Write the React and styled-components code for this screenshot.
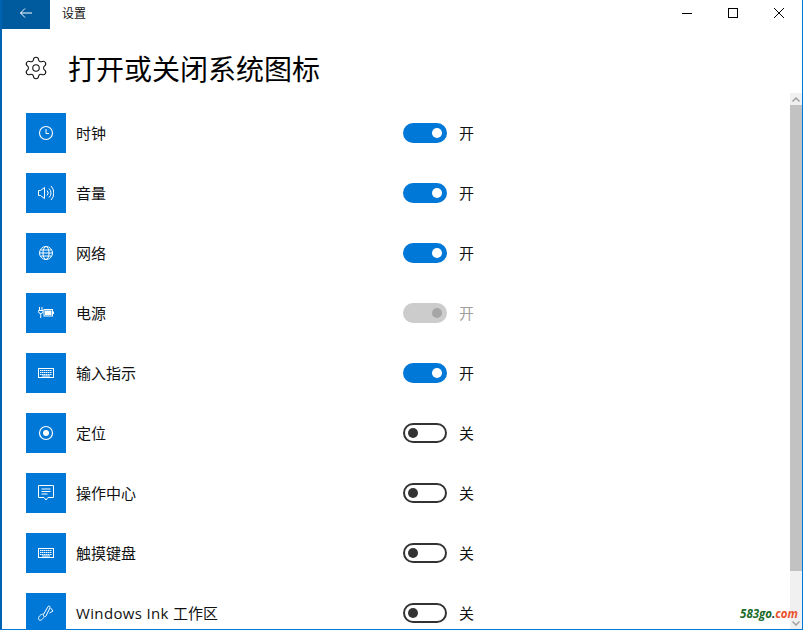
import React from 'react';
import styled, { createGlobalStyle } from 'styled-components';
import { Settings } from 'lucide-react';

const GlobalStyle = createGlobalStyle`
  html, body { margin: 0; padding: 0; background: #fff; }
  body { font-family: "Noto Sans CJK SC", "Open Sans", sans-serif; }
`;

const Win = styled.div`
  position: relative;
  box-sizing: border-box;
  width: 803px;
  height: 630px;
  overflow: hidden;
  display: flex;
  flex-direction: column;
  background: #fff;
  border-left: 2px solid #0063b1;
  border-right: 1px solid #0078d7;
  border-bottom: 1px solid #0078d7;
`;

const TitleBar = styled.div`
  height: 29px;
  flex: none;
  display: flex;
  align-items: flex-start;
`;

const BackBtn = styled.div`
  box-sizing: border-box;
  width: 48px;
  height: 29px;
  padding-bottom: 4px;
  background: #005a9e;
  color: #fff;
  display: flex;
  align-items: center;
  justify-content: center;
`;

const TitleText = styled.div`
  margin-left: 12px;
  font-size: 12px;
  line-height: 26px;
  color: #111;
  flex: 1;
`;

const WinBtn = styled.div`
  width: 46px;
  height: 26px;
  display: flex;
  align-items: center;
  justify-content: center;
`;

const Header = styled.div`
  box-sizing: border-box;
  height: 64px;
  flex: none;
  display: flex;
  align-items: center;
  padding: 13px 0 0 21px;
  gap: 19px;
  color: #111;
`;

const PageTitle = styled.h1`
  margin: 0;
  font-size: 28px;
  font-weight: 400;
  color: #000;
`;

const Body = styled.div`
  flex: 1;
  min-height: 0;
  display: flex;
`;

const List = styled.div`
  flex: 1;
  overflow: hidden;
  padding: 20px 0 0 24px;
  display: flex;
  flex-direction: column;
  gap: 20px;
`;

const Row = styled.div`
  flex: none;
  height: 40px;
  display: flex;
  align-items: center;
`;

const IconBox = styled.div`
  width: 40px;
  height: 40px;
  flex: none;
  background: #0078d7;
  color: #fff;
  display: flex;
  align-items: center;
  justify-content: center;
`;

const Label = styled.div`
  width: 327px;
  margin-left: 10px;
  padding-bottom: 2px;
  font-size: 15px;
  color: #111;
  font-family: "Open Sans", "Noto Sans CJK SC", sans-serif;
`;

const Latin = styled.span`
  letter-spacing: 0.35px;
`;

const Toggle = styled.div`
  box-sizing: border-box;
  width: 44px;
  height: 20px;
  border-radius: 10px;
  display: flex;
  align-items: center;
  padding: 0 ${p => (p.$on ? '5px' : '3px')};
  justify-content: ${p => (p.$on ? 'flex-end' : 'flex-start')};
  background: ${p => (p.$disabled ? '#cccccc' : p.$on ? '#0078d7' : 'transparent')};
  border: ${p => (p.$on ? 'none' : '2px solid #333')};
`;

const Knob = styled.div`
  width: 10px;
  height: 10px;
  border-radius: 50%;
  background: ${p => (p.$disabled ? '#a6a6a6' : p.$on ? '#fff' : '#333')};
`;

const State = styled.div`
  margin-left: 12px;
  padding-bottom: 2px;
  font-size: 15px;
  color: ${p => (p.$disabled ? '#a0a0a0' : '#111')};
`;

const ScrollBar = styled.div`
  width: 12px;
  flex: none;
  background: #f0f0f0;
  display: flex;
  flex-direction: column;
`;

const ScrollArrow = styled.div`
  height: 12px;
  flex: none;
  display: flex;
  align-items: center;
  justify-content: center;
`;

const ScrollThumb = styled.div`
  height: 466px;
  flex: none;
  background: #c2c2c2;
`;

const ScrollRest = styled.div`
  flex: 1;
`;

const Watermark = styled.div`
  position: absolute;
  right: 4px;
  bottom: 7px;
  font-family: "Open Sans", sans-serif;
  font-size: 11.5px;
  line-height: 16px;
  font-style: italic;
  font-weight: 700;
  color: #1a6b2a;
`;

const Dot = styled.span`
  color: #333;
`;

const Com = styled.span`
  color: #e8502a;
`;

const Glyph = ({ children }) => (
  <svg width="16" height="16" viewBox="0 0 16 16" fill="none" stroke="currentColor" strokeWidth="1">
    {children}
  </svg>
);

const keyboard = (
  <Glyph>
    <rect x="0.5" y="3.5" width="15" height="9" />
    <path d="M2 5.5h12M2 7.5h12" strokeDasharray="1.5 .5" />
    <path d="M2 9.500h12" strokeDasharray="1.5 .5" />
    <path d="M4 11h8" />
  </Glyph>
);

const icons = {
  clock: (
    <Glyph>
      <circle cx="8" cy="8" r="6.5" strokeWidth="1.1" />
      <path d="M8 4v4.5h3" />
    </Glyph>
  ),
  sound: (
    <Glyph>
      <path d="M.5 5.5h2l4-3v11l-4-3h-2z" />
      <path d="M9 5.5a3.5 3.500 0 0 1 0 5M11 3.500a6 6 0 0 1 0 9M13 1a10 10 0 0 1 0 14" />
    </Glyph>
  ),
  globe: (
    <Glyph>
      <circle cx="8" cy="8" r="6.5" />
      <ellipse cx="8" cy="8" rx="3" ry="6.5" />
      <path d="M1.5 8h13M2.5 5h11M2.5 11h11" />
    </Glyph>
  ),
  power: (
    <Glyph>
      <path d="M1.500 2v3M4 2v3M.5 5.500h4.500v1a2 2 0 0 1-2 2h-.5a2 2 0 0 1-2-2zM2.750 8.500v4.500" />
      <rect x="6" y="4.500" width="8.500" height="6.500" />
      <rect x="7" y="5.500" width="6.500" height="4.500" fill="currentColor" stroke="none" />
      <path d="M15.500 6.500v2.500" />
    </Glyph>
  ),
  keyboard,
  location: (
    <Glyph>
      <circle cx="8" cy="8" r="6.5" strokeWidth="1.2" />
      <circle cx="8" cy="8" r="3" fill="currentColor" stroke="none" />
    </Glyph>
  ),
  action: (
    <Glyph>
      <path d="M.5 .5h15v12H10l-2 2.500-2-2.500H.5z" />
      <path d="M3.500 4h9M3.500 6.500h9M3.500 9h6" />
    </Glyph>
  ),
  ink: (
    <Glyph>
      <path d="M5.500 9.500L10 1.500c1-1 2.500-.3 2 1.200L8 11c-.8 1.300-2.200 1-2.500-.2z" />
      <path d="M5.500 9C2.500 9 0 12 .6 14.300c.6 1.500 3.400 1.400 4.900-1.800" />
      <path d="M12.500 3l2.500 3-3.500 2" />
    </Glyph>
  ),
};

const rows = [
  { icon: 'clock', label: '时钟', on: true },
  { icon: 'sound', label: '音量', on: true },
  { icon: 'globe', label: '网络', on: true },
  { icon: 'power', label: '电源', on: true, disabled: true },
  { icon: 'keyboard', label: '输入指示', on: true },
  { icon: 'location', label: '定位', on: false },
  { icon: 'action', label: '操作中心', on: false },
  { icon: 'keyboard', label: '触摸键盘', on: false },
  { icon: 'ink', label: '工作区', latin: 'Windows Ink ', on: false },
];

export default function App() {
  return (
    <>
      <GlobalStyle />
      <Win>
        <TitleBar>
          <BackBtn>
            <svg width="12" height="10" viewBox="0 0 12 10" fill="none" stroke="currentColor">
              <path d="M.5 5H12M5 .5L.5 5 5 9.500" />
            </svg>
          </BackBtn>
          <TitleText>设置</TitleText>
          <WinBtn>
            <svg width="10" height="10" viewBox="0 0 10 10" stroke="#000"><path d="M0 5.5h10" /></svg>
          </WinBtn>
          <WinBtn>
            <svg width="10" height="10" viewBox="0 0 10 10" stroke="#000" fill="none"><rect x=".5" y=".5" width="9" height="9" /></svg>
          </WinBtn>
          <WinBtn>
            <svg width="10" height="10" viewBox="0 0 10 10" stroke="#000"><path d="M0 0l10 10M10 0L0 10" /></svg>
          </WinBtn>
        </TitleBar>
        <Header>
          <Settings size={26} strokeWidth={1} />
          <PageTitle>打开或关闭系统图标</PageTitle>
        </Header>
        <Body>
          <List>
            {rows.map(r => (
              <Row key={r.label}>
                <IconBox>{icons[r.icon]}</IconBox>
                <Label>{r.latin && <Latin>{r.latin}</Latin>}{r.label}</Label>
                <Toggle $on={r.on} $disabled={r.disabled}>
                  <Knob $on={r.on} $disabled={r.disabled} />
                </Toggle>
                <State $disabled={r.disabled}>{r.on ? '开' : '关'}</State>
              </Row>
            ))}
          </List>
          <ScrollBar>
            <ScrollArrow>
              <svg width="8" height="5" viewBox="0 0 8 5" fill="none" stroke="#a0a0a0" strokeWidth="1.5"><path d="M.5 4.500L4 1l3.500 3.500" /></svg>
            </ScrollArrow>
            <ScrollThumb />
            <ScrollRest />
            <ScrollArrow>
              <svg width="8" height="5" viewBox="0 0 8 5" fill="none" stroke="#a0a0a0" strokeWidth="1.5"><path d="M.5 .5L4 4l3.500-3.500" /></svg>
            </ScrollArrow>
          </ScrollBar>
        </Body>
        <Watermark>583go<Dot>.</Dot><Com>com</Com></Watermark>
      </Win>
    </>
  );
}
